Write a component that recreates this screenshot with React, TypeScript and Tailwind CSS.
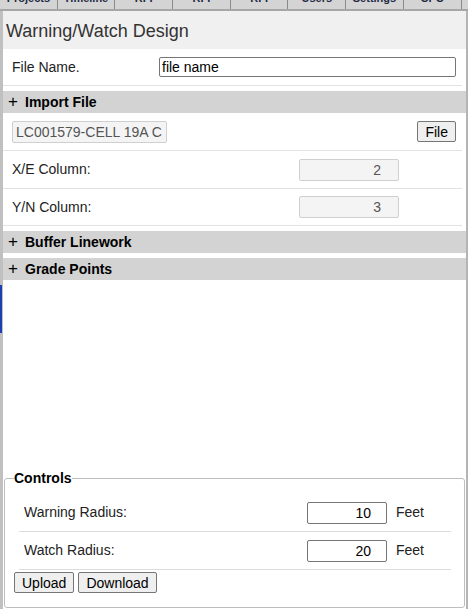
const tabs = ['Projects', 'Timeline', 'RFI', 'RFI', 'RFI', 'Users', 'Settings', 'CPC'];

function SectionHeader({ title }: { title: string }) {
  return (
    <div className="mt-[5px] h-[22px] bg-[#d3d3d3] flex items-center pl-[5px] text-[14px] font-bold text-black">
      <span className="w-[17px] text-[17px] font-normal leading-none -mt-[2px]">+</span>
      {title}
    </div>
  );
}

function ColumnRow({ label, value, last }: { label: string; value: string; last?: boolean }) {
  return (
    <div className={`mr-[4px] flex items-center border-b border-[#e2e2e2] ${last ? 'h-[37px]' : 'h-[38px]'}`}>
      <span className="flex-1 pl-[9px] text-[14px] text-[#222]">{label}</span>
      <input
        disabled
        value={value}
        readOnly
        className="mr-[63px] h-[22px] w-[100px] rounded-[2px] border border-[#cfcfcf] bg-[#f4f4f4] pr-[17px] text-right text-[14px] text-[#555]"
      />
    </div>
  );
}

function RadiusRow({ label, value }: { label: string; value: string }) {
  return (
    <div className="ml-[5px] mr-[4px] h-[38px] flex items-center border-b border-[#dcdcdc]">
      <span className="flex-1 pl-[5px] text-[14px] text-[#222]">{label}</span>
      <input
        value={value}
        readOnly
        className="h-[22px] w-[80px] rounded-[2px] border border-[#767676] bg-white pr-[15px] text-right text-[14px] text-black"
      />
      <span className="w-[64px] pl-[9px] text-[14px] text-[#222]">Feet</span>
    </div>
  );
}

export default function App() {
  return (
    <div
      className="relative h-[609px] w-[468px] overflow-hidden bg-white flex flex-col"
      style={{ fontFamily: '"Liberation Sans", Arial, sans-serif' }}
    >
      {/* Tab strip (scrolled, only lower half visible) */}
      <div className="h-[11px] overflow-hidden bg-[#d4d4d4] border-b-2 border-[#a6a6a6] shrink-0">
        <div className="-mt-[13px] flex">
          {tabs.map((t, i) => (
            <div
              key={i}
              className="h-[22px] w-[57.7px] shrink-0 flex items-center justify-center border-r border-[#8a8a8a] text-[11px] font-bold text-[#1f2a44]"
            >
              {t}
            </div>
          ))}
        </div>
      </div>

      <div className="flex-1 flex flex-col border-l-[3px] border-r-2 border-[#b4b4b4] border-l-[#c0c0c0]">
        <div className="h-[38px] bg-[#f0f0f0] flex items-center pl-[3px] pt-[3px] text-[18px] text-[#333]">
          Warning/Watch Design
        </div>

        <div className="mr-[4px] h-[37px] flex items-center border-b border-[#e2e2e2]">
          <span className="w-[156px] pl-[9px] text-[14px] text-[#222]">File Name.</span>
          <input
            value="file name"
            readOnly
            className="h-[20px] flex-1 mr-[6px] rounded-[2px] border border-[#767676] bg-white px-[2px] text-[14px] text-black"
          />
        </div>

        <SectionHeader title="Import File" />

        <div className="mr-[4px] h-[38px] flex items-center justify-between border-b border-[#e2e2e2]">
          <input
            disabled
            value="LC001579-CELL 19A C"
            readOnly
            className="ml-[9px] h-[22px] w-[155px] rounded-[2px] border border-[#cfcfcf] bg-[#f4f4f4] px-[3px] text-[14px] text-[#555]"
          />
          <button className="mr-[6px] h-[21px] rounded-[2px] border border-[#767676] bg-[#efefef] px-[7px] text-[14px] leading-none text-black">
            File
          </button>
        </div>

        <ColumnRow label="X/E Column:" value="2" />
        <ColumnRow label="Y/N Column:" value="3" last />

        <SectionHeader title="Buffer Linework" />
        <SectionHeader title="Grade Points" />

        <div className="flex-1" />

        <fieldset className="ml-[1px] mr-[1px] mb-[1px] rounded-[3px] border border-[#bdbdbd] px-[9px] pb-[14px] pt-[5px]">
          <legend className="px-0 text-[14px] font-bold text-black">Controls</legend>
          <RadiusRow label="Warning Radius:" value="10" />
          <RadiusRow label="Watch Radius:" value="20" />
          <div className="mt-[2px] flex gap-[4px]">
            <button className="h-[21px] rounded-[2px] border border-[#767676] bg-[#efefef] px-[7px] text-[14px] leading-none text-black">
              Upload
            </button>
            <button className="h-[21px] rounded-[2px] border border-[#767676] bg-[#efefef] px-[7px] text-[14px] leading-none text-black">
              Download
            </button>
          </div>
        </fieldset>
      </div>

      {/* resize handle on the left edge */}
      <div className="absolute left-0 top-[285px] h-[48px] w-[2px] bg-[#1d3fb0]" />
    </div>
  );
}
